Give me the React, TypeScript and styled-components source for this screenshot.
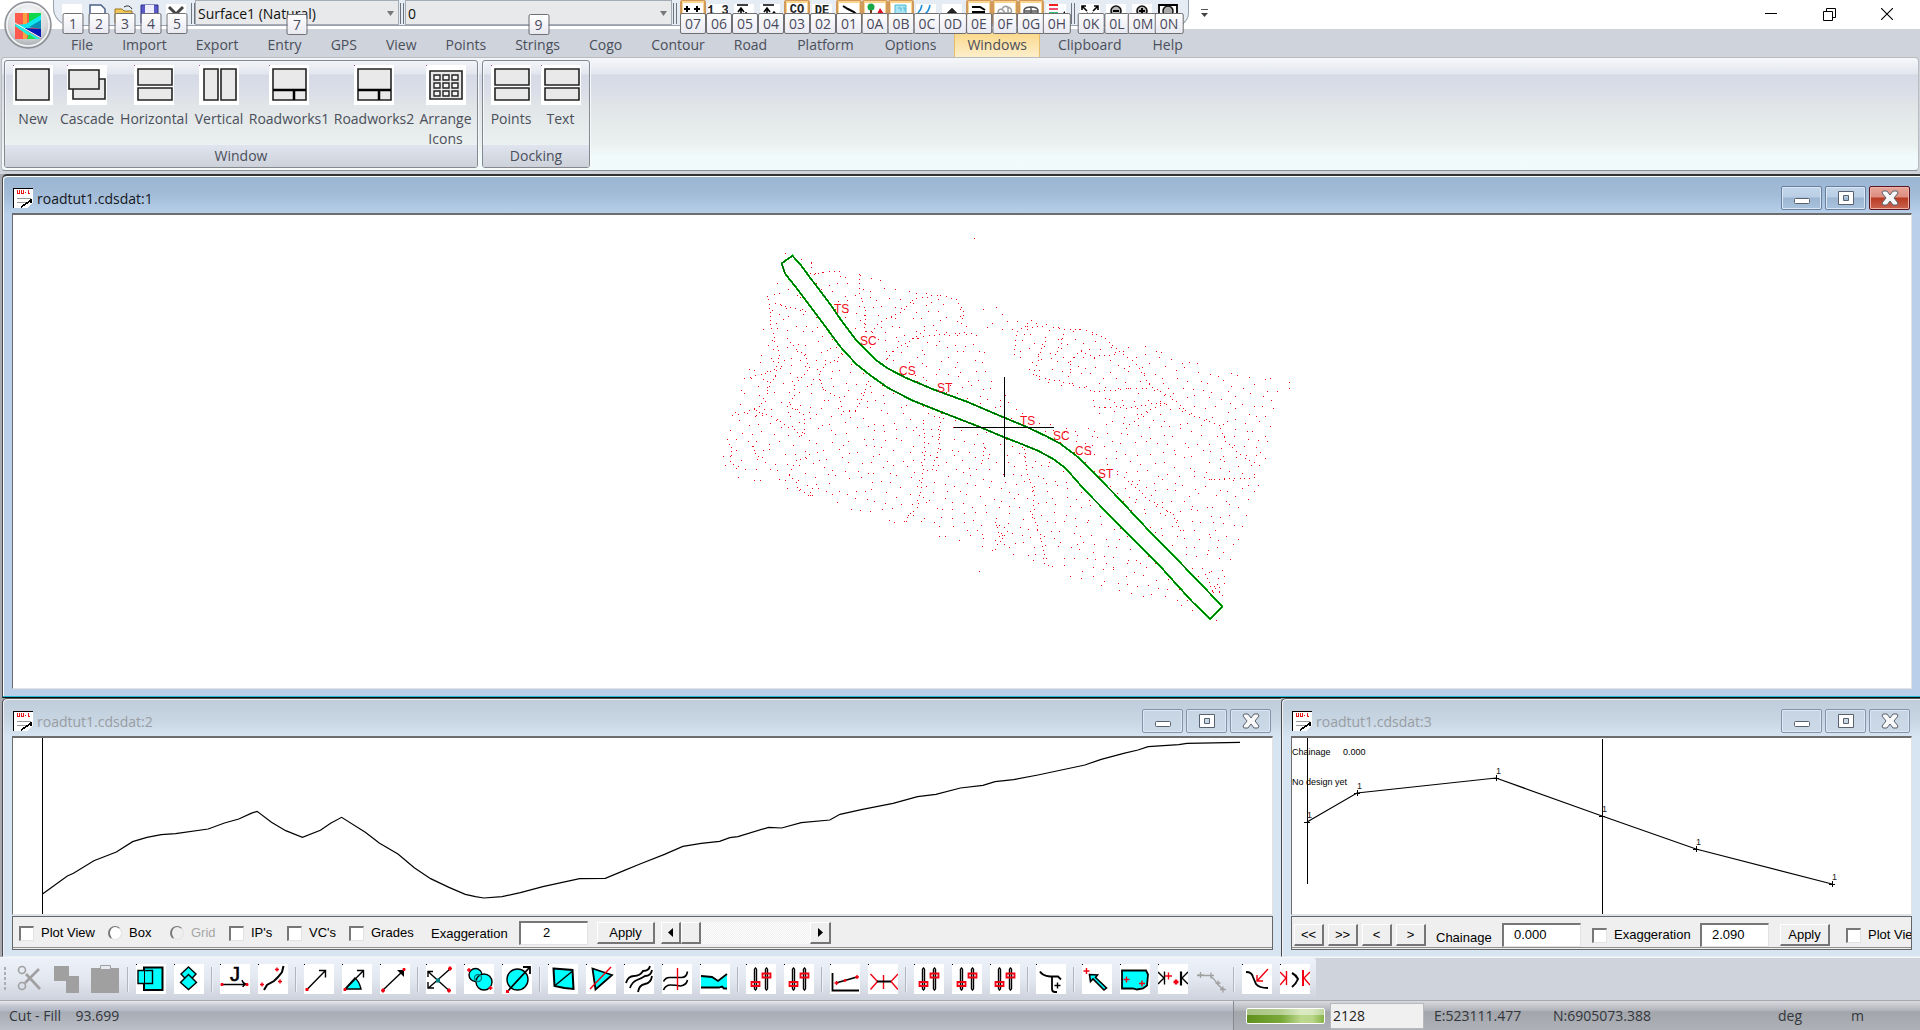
import React from "react";
import styled, { createGlobalStyle, css } from "styled-components";

const UI = `"Open Sans", "Noto Sans", sans-serif`;
const DIALOG = `"Liberation Sans", Arial, sans-serif`;

const Global = createGlobalStyle`
  * { box-sizing: border-box; }
  body { margin: 0; font-family: ${UI}; font-size: 14px; line-height: 20px; color: #4a4f5a; background: #cfd3dc; }
  button, input, select { font: inherit; color: inherit; margin: 0; }
  svg { display: block; }
`;

const Page = styled.div`
  display: flex;
  flex-direction: column;
  height: 100vh;
  overflow: hidden;
`;

/* ---------- title bar ---------- */

const TitleBar = styled.header`
  position: relative;
  display: flex;
  height: 29px;
  background: #fff;
  justify-content: space-between;
`;

const Orb = styled.button`
  position: absolute;
  left: 4px;
  top: 1px;
  z-index: 3;
  width: 49px;
  height: 49px;
  padding: 0;
  border: 0;
  background: none;
`;

const QuickBar = styled.div`
  display: flex;
  height: 26px;
  margin-left: 53px;
  padding: 0 6px;
  background: #e6ecf3;
  border: 1px solid #9aa2ae;
  border-top: 0;
  border-radius: 0 0 13px 18px;
`;

const QuickItem = styled.div`
  position: relative;
  width: 26px;
  height: 24px;
  z-index: 2;
`;

const QuickButton = styled.button<{ $on?: boolean; $blank?: boolean }>`
  width: 26px;
  height: 25px;
  padding: 3px 2px 0;
  background: none;
  border: 0;
  overflow: hidden;
  ${(p) =>
    p.$on &&
    css`
      padding: 1px 1px 0;
      background: #fdd48d;
      border: 2px solid #cf9a5c;
      border-top-width: 1px;
      border-radius: 2px;
    `}
  svg { width: 20px; height: 20px; background: ${(p) => (p.$blank ? "transparent" : "#fff")}; }
`;

const KeyTip = styled.span`
  position: absolute;
  top: 13px;
  left: 50%;
  transform: translateX(-50%);
  z-index: 2;
  min-width: 21px;
  height: 21px;
  padding: 0 4px;
  line-height: 19px;
  text-align: center;
  color: #4a4a5c;
  background: linear-gradient(#fff, #e9e9f2);
  border: 1px solid #6f6f74;
  border-radius: 2px;
`;

const QuickRule = styled.span<{ $space: number }>`
  width: 4px;
  height: 21px;
  margin: 3px ${(p) => p.$space}px 0 1px;
  border-left: 1px solid #6d747e;
  border-right: 1px solid #6d747e;
`;

const ComboBox = styled.div<{ $w: number }>`
  position: relative;
  width: ${(p) => p.$w}px;
  height: 25px;
  background: #e8e9ea;
  border: 1px solid #a3abb5;
  svg { position: absolute; right: 4px; top: 10px; }
`;

const Select = styled.select`
  width: 100%;
  height: 24px;
  padding: 2px 0 0 2px;
  border: 0;
  background: none;
  appearance: none;
  color: #111;
`;

const More = styled.button`
  width: 16px;
  height: 20px;
  margin: 3px 0 0 7px;
  padding: 0;
  border: 0;
  background: none;
`;

const LeftPart = styled.div`
  display: flex;
`;

const Captions = styled.div`
  display: flex;
  padding-right: 4px;
`;

const CaptionButton = styled.button`
  display: grid;
  place-items: center;
  width: 58px;
  height: 28px;
  padding: 0;
  border: 0;
  background: none;
`;

/* ---------- ribbon ---------- */

const Tabs = styled.nav`
  display: flex;
  gap: 5px;
  height: 28px;
  padding-left: 59px;
  background: #cfd3dc;
`;

const Tab = styled.button<{ $active?: boolean; $wide?: boolean }>`
  height: 24px;
  margin-top: 4px;
  padding: 0 ${(p) => (p.$wide ? 13 : 12)}px;
  line-height: 24px;
  border: 0;
  background: none;
  ${(p) =>
    p.$active &&
    css`
      background: linear-gradient(#fbd98c, #fdeecb);
      box-shadow: inset 1px 0 #e8bd6a, inset -1px 0 #e8bd6a;
    `}
`;

const Ribbon = styled.section`
  display: flex;
  gap: 4px;
  height: 114px;
  margin: 0 1px;
  padding: 2px 2px 0;
  background: linear-gradient(
    #f6f7fa 0, #e3e6ee 16px, #d5dae6 17px, #dcdfe8 36px, #e1e5e7 48px, #eaefef 84px, #f0fafa 98px, #f2fbfb 114px
  );
  border: 1px solid #b9bbbd;
  border-bottom: 1px solid #8e9097;
  border-radius: 4px;
`;

const RibbonGroup = styled.section`
  display: flex;
  flex-direction: column;
  height: 108px;
  border: 1px solid #85888f;
  border-radius: 3px;
  overflow: hidden;
  box-shadow: inset 1px 1px #f4f6fa, 1px 1px #f8fafb;
`;

const GroupItems = styled.div`
  display: flex;
  flex: 1;
  min-height: 0;
  align-items: flex-start;
  padding: 4px 3px 0 4px;
`;

const GroupName = styled.div`
  flex: none;
  height: 22px;
  line-height: 22px;
  text-align: center;
  background: linear-gradient(#e0e4ee, #cdd1da);
`;

const BigButton = styled.button<{ $w: number }>`
  display: flex;
  flex-direction: column;
  align-items: center;
  width: ${(p) => p.$w}px;
  padding: 0;
  border: 0;
  background: none;
  white-space: nowrap;
  svg { width: 40px; height: 40px; margin-bottom: 4px; background: #fff; }
`;

/* ---------- document windows ---------- */

const Desk = styled.main`
  display: grid;
  flex: 1;
  min-height: 0;
  grid-template-columns: minmax(0, 1279fr) minmax(0, 639fr);
  grid-template-rows: minmax(0, 1fr) 259px;
  margin-top: 3px;
  padding-left: 2px;
  background: #a9abb1;
`;

const Doc = styled.section<{ $active?: boolean }>`
  display: flex;
  flex-direction: column;
  min-width: 0;
  grid-column: ${(p) => (p.$active ? "1 / 3" : "auto")};
  padding: 0 8px ${(p) => (p.$active ? 8 : 6)}px 9px;
  border-left: 1px solid #47494d;
  border-top: ${(p) => (p.$active ? "2px solid #333" : "1px solid #555")};
  border-bottom: ${(p) => (p.$active ? "1px solid #111" : "1px solid #e8edf3")};
  border-radius: 5px 0 0 0;
  box-shadow: ${(p) => (p.$active ? "inset 0 -1px #20bcd8, inset 1px 1px #fff" : "inset 1px 1px #eef2f6")};
  background: ${(p) =>
    p.$active
      ? "linear-gradient(#99b4d1 0, #a3bdd9 20px, #b8d0ea 38px, #bad0ea 39px)"
      : "linear-gradient(#bfccda 0, #c7d4e1 20px, #d6e3f1 37px, #d7e4f2 38px)"};
`;

const DocTitle = styled.header<{ $active?: boolean }>`
  display: flex;
  flex: none;
  align-items: flex-start;
  height: 37px;
  padding: 10px 2px 0 1px;
  color: ${(p) => (p.$active ? "#15171c" : "#989da3")};
  > svg { margin-top: 2px; }
  h2 { flex: 1; margin: 0 0 0 4px; font-size: 14px; font-weight: 400; line-height: 25px; }
`;

const DocButtons = styled.div`
  display: flex;
  gap: 3px;
`;

const DocButton = styled.button<{ $active?: boolean; $red?: boolean }>`
  display: grid;
  place-items: center;
  width: 41px;
  height: 24px;
  padding: 0;
  border-radius: 2px;
  border: 1px solid ${(p) => (p.$red ? "#5b1420" : p.$active ? "#67809f" : "#8393a9")};
  box-shadow: inset 0 0 0 1px ${(p) => (p.$red ? "#eeb3a8" : "#dbe7f4")};
  background: ${(p) =>
    p.$red
      ? "linear-gradient(#e8a69b 0, #dd8d7f 10px, #b83a22 11px, #ca6450)"
      : p.$active
      ? "linear-gradient(#c3d6ea 0, #b9cee5 10px, #9cb6d2 11px, #a9c2dd)"
      : "linear-gradient(#c7d4e2, #ccd9e8)"};
`;

const Pane = styled.div`
  flex: 1;
  min-height: 0;
  overflow: hidden;
  background: #fff;
  border: 1px solid #6d6d6d;
  border-top-width: 2px;
  border-right-color: #e3e3e3;
  border-bottom-color: #e3e3e3;
  svg { width: 100%; height: 100%; }
`;

const DialogBar = styled.form<{ $low?: boolean }>`
  display: flex;
  flex: none;
  align-items: center;
  height: 34px;
  margin-top: 1px;
  padding: ${(p) => (p.$low ? "4px 0 0 2px" : "0 0 0 6px")};
  overflow: hidden;
  white-space: nowrap;
  font-family: ${DIALOG};
  font-size: 13px;
  line-height: 16px;
  color: #000;
  background: #efefef;
  border: 1px solid #666;
  box-shadow: inset 0 -1px #efefef, inset 0 -2px #8e8e8e;
`;

const Choice = styled.label<{ $w: number; $off?: boolean }>`
  display: flex;
  flex: none;
  align-items: center;
  gap: 7px;
  width: ${(p) => p.$w}px;
  color: ${(p) => (p.$off ? "#a6a6a6" : "inherit")};
`;

const Tick = styled.input<{ $off?: boolean }>`
  appearance: none;
  width: 15px;
  height: 15px;
  flex: none;
  background: ${(p) => (p.$off ? "#efefef" : "#fff")};
  border: 2px solid #777;
  border-right: 1px solid #e2e2e2;
  border-bottom: 1px solid #e2e2e2;
  &[type="radio"] { width: 14px; height: 14px; border-radius: 50%; border-width: 1px 1px 1px 2px; }
`;

const Caption = styled.label<{ $w: number; $low?: boolean }>`
  flex: none;
  width: ${(p) => p.$w}px;
  padding-top: ${(p) => (p.$low ? 5 : 1)}px;
`;

const Field = styled.input<{ $w: number; $gap: number }>`
  flex: none;
  width: ${(p) => p.$w}px;
  height: 24px;
  margin-right: ${(p) => p.$gap}px;
  padding: 0 0 2px 10px;
  background: #fff;
  border: 2px solid #777;
  border-right: 1px solid #e2e2e2;
  border-bottom: 1px solid #e2e2e2;
  &[data-center] { padding-left: 22px; }
`;

const PushButton = styled.button<{ $w: number; $gap: number }>`
  flex: none;
  display: grid;
  place-items: center;
  width: ${(p) => p.$w}px;
  height: 22px;
  margin-right: ${(p) => p.$gap}px;
  padding: 0;
  background: #efefef;
  border: 1px solid #fff;
  border-right: 2px solid #757575;
  border-bottom: 2px solid #757575;
`;

const Slider = styled.input`
  appearance: none;
  flex: none;
  width: 129px;
  height: 22px;
  background: repeating-conic-gradient(#fff 0 25%, #efefef 0 50%) 0 0 / 2px 2px;
  &::-webkit-slider-thumb {
    appearance: none;
    width: 20px;
    height: 22px;
    background: #efefef;
    border: 1px solid #fff;
    border-right: 2px solid #757575;
    border-bottom: 2px solid #757575;
  }
`;

/* ---------- bottom bars ---------- */

const ToolStrip = styled.div`
  display: flex;
  height: 44px;
  background: #cfd3dc;
  border-top: 1px solid #f4f6fa;
  border-bottom: 1px solid #a6a9b2;
`;

const Tools = styled.div`
  display: flex;
  align-items: center;
  padding: 0 2px 0 4px;
  border-radius: 0 3px 0 0;
  background: linear-gradient(#edf1f9, #e3e7f0 50%, #ced2dc);
`;

const Grip = styled.span`
  width: 6px;
  height: 24px;
  background: repeating-linear-gradient(#a9adb6 0 3px, transparent 3px 5px) 0 0 / 2px 100% no-repeat;
`;

const Tool = styled.button<{ $plain?: boolean }>`
  width: 38px;
  height: 30px;
  padding: 0 4px;
  border: 0;
  background: none;
  svg {
    width: 30px;
    height: 30px;
    background: ${(p) => (p.$plain ? "transparent" : "#fff")};
  }
`;

const ToolRule = styled.span`
  width: 2px;
  height: 25px;
  margin: 0 3px;
  background: #b1b5bf;
  border-right: 1px solid #eef1f7;
`;

const StatusBar = styled.footer`
  display: flex;
  height: 29px;
  color: #33363c;
  line-height: 29px;
  background: linear-gradient(#e9e9ec 0, #c3c6d0 5px, #b3b8c5 10px, #a6acb4 11px, #bcbfc8);
`;

const StatusMessage = styled.div`
  flex: 1;
  padding-left: 9px;
  white-space: pre;
  border-right: 1px solid #85888e;
`;

const StatusFields = styled.div`
  display: flex;
  align-items: center;
  width: 686px;
  background: linear-gradient(#d8d9dd 0, #b4b6bd 9px, #a2a5aa 11px, #aeb2b8);
`;

const Progress = styled.div`
  width: 79px;
  height: 16px;
  margin: 0 5px 0 12px;
  border: 1px solid #fff;
  border-radius: 2px;
  background: linear-gradient(rgba(255, 255, 255, 0.45) 0 45%, rgba(255, 255, 255, 0) 46%),
    linear-gradient(90deg, #5f901c, #7aa93a 45%, #bcd88e 70%, #b8d588 85%, #86b446);
`;

const StatusInput = styled.input`
  width: 94px;
  height: 26px;
  margin-right: 10px;
  padding: 0 2px;
  background: #f0f0f0;
  border: 1px solid #b6b9be;
  color: #222;
`;

const StatusCell = styled.span<{ $w: number }>`
  width: ${(p) => p.$w}px;
`;

/* ---------- drawings ---------- */

type Pt = [number, number];

// Survey sheet coordinates to pane pixels.
const sheet = ([x, y]: Pt): Pt => [x * 0.3954 + 677, y / 3 + 5];
const poly = (pts: Pt[]) => pts.map((p) => p.join(",")).join(" ");

const ROAD: Pt[] = [
  [259, 107], [280, 135], [305, 175], [350, 245], [385, 305], [420, 360], [470, 420], [500, 445], [545, 473],
  [615, 508], [700, 545], [795, 593], [850, 620], [900, 648], [935, 670], [975, 705], [1010, 745], [1080, 830],
  [1155, 925], [1240, 1028], [1300, 1102], [1335, 1145], [1346, 1160], [1316, 1197], [1270, 1145],
  [1190, 1040], [1100, 933], [1000, 812], [950, 745], [920, 718], [880, 692], [830, 668], [795, 652], [735, 622],
  [640, 578], [560, 540], [500, 503], [455, 465], [420, 432], [380, 380], [330, 300], [270, 205], [240, 160],
  [232, 130],
];

const EXTENT: Pt[] = [
  [245, 105], [300, 125], [350, 135], [420, 155], [500, 185], [560, 205], [680, 240], [690, 300], [725, 340],
  [780, 262], [830, 290], [870, 290], [950, 322], [1000, 325], [1080, 385], [1145, 375], [1280, 408], [1335, 450],
  [1450, 460], [1490, 490], [1480, 640], [1450, 740], [1425, 840], [1380, 980], [1360, 1110], [1330, 1200],
  [1190, 1145], [1035, 1100], [900, 1050], [760, 1000], [580, 932], [410, 870], [290, 828], [100, 765], [70, 740],
  [72, 700], [110, 560], [135, 470], [160, 430], [180, 325], [190, 240], [222, 170],
];

const HOLES: Pt[][] = [
  [[790, 330], [815, 340], [810, 430], [870, 480], [1020, 520], [1010, 600], [890, 600], [800, 500], [745, 400], [740, 330]],
];

const BREAKLINES: Pt[][] = [
  [[196, 225], [200, 310], [222, 400], [215, 450], [190, 520], [165, 570], [160, 600]],
  [[213, 247], [300, 275]],
  [[135, 473], [190, 455], [235, 440]],
  [[250, 365], [285, 400], [300, 440], [262, 490], [262, 520], [245, 555], [285, 580], [290, 650]],
  [[380, 402], [340, 430], [322, 460], [330, 500], [372, 530], [385, 568], [415, 568], [440, 515], [450, 470]],
  [[105, 582], [160, 565], [215, 595], [290, 650]],
  [[300, 700], [265, 720], [250, 760], [270, 800], [305, 830]],
  [[315, 790], [300, 812], [310, 832]],
  [[425, 160], [425, 215], [440, 270], [440, 345]],
  [[455, 330], [480, 300], [530, 275], [560, 235], [620, 222], [670, 235], [687, 270], [685, 320]],
  [[495, 415], [520, 380], [560, 355], [600, 343], [720, 337]],
  [[560, 355], [600, 320]],
  [[590, 610], [590, 690], [583, 800], [570, 860], [530, 910]],
  [[630, 590], [625, 680], [605, 760]],
  [[815, 400], [825, 330], [870, 290]],
  [[850, 323], [900, 312], [930, 323], [1000, 328], [1050, 355], [1085, 390], [1125, 430], [1165, 500], [1210, 525], [1260, 580], [1335, 612], [1350, 660], [1400, 710], [1450, 740]],
  [[945, 325], [935, 380], [905, 420]],
  [[868, 460], [885, 380], [900, 350]],
  [[870, 465], [930, 480], [1020, 510], [1165, 500]],
  [[960, 455], [960, 420], [985, 390], [1020, 408], [1085, 400]],
  [[1100, 620], [1150, 570], [1210, 540]],
  [[1020, 555], [1100, 560], [1200, 543]],
  [[845, 670], [850, 760], [868, 810], [865, 880], [885, 950], [895, 1040]],
  [[770, 905], [800, 930], [775, 970], [763, 1000]],
  [[770, 905], [778, 945], [800, 940]],
  [[1310, 775], [1440, 770]],
  [[1095, 770], [1150, 830], [1220, 880], [1240, 940]],
  [[303, 125], [303, 170]],
  [[310, 160], [350, 150], [390, 150]],
  [[740, 680], [735, 740]],
  [[100, 680], [97, 720], [130, 745]],
  [[155, 675], [160, 700], [190, 715]],
  [[1300, 1060], [1320, 1110], [1350, 1110]],
  [[1310, 1140], [1330, 1090], [1345, 1135]],
];

const inside = ([x, y]: Pt, ring: Pt[]) => {
  let hit = false;
  for (let i = 0, j = ring.length - 1; i < ring.length; j = i++) {
    const [xi, yi] = ring[i];
    const [xj, yj] = ring[j];
    if (yi > y !== yj > y && x < ((xj - xi) * (y - yi)) / (yj - yi) + xi) hit = !hit;
  }
  return hit;
};

const surveyPoints = (): string => {
  const dots: Pt[] = [[717, 55], [742, 267], [775, 262], [732, 1054], [241, 100], [790, 328], [1330, 1201], [1516, 485], [1516, 503]];
  let seed = 7;
  const rnd = () => ((seed = (seed * 16807) % 2147483647) / 2147483647);
  for (const line of BREAKLINES) {
    for (let i = 1; i < line.length; i++) {
      const [ax, ay] = line[i - 1];
      const [bx, by] = line[i];
      const n = Math.max(1, Math.round(Math.hypot(bx - ax, by - ay) / 13));
      for (let k = 0; k < n; k++) dots.push([ax + ((bx - ax) * k) / n + rnd() * 4, ay + ((by - ay) * k) / n + rnd() * 4]);
    }
  }
  for (let r = 0; r < 44; r++) {
    for (let c = 0; c < 56; c++) {
      const p: Pt = [60 + c * 28 + (r % 2) * 10 + rnd() * 20 - r * 3, 60 + r * 26 + c * 4 + rnd() * 20];
      if (inside(p, EXTENT) && !HOLES.some((h) => inside(p, h))) dots.push(p);
    }
  }
  return dots
    .filter((p) => !inside(p, ROAD))
    .map((p) => sheet(p))
    .map(([x, y]) => `M${Math.round(x)} ${Math.round(y)}h1v1h-1z`)
    .join("");
};

const MARKS: [number, number, string][] = [
  [364, 278, "TS"], [430, 375, "SC"], [529, 465, "CS"], [625, 516, "ST"],
  [834, 614, "TS"], [919, 659, "SC"], [974, 705, "CS"], [1032, 773, "ST"],
];

const PlanView = () => {
  const outline = poly(ROAD.map(sheet));
  return (
    <svg role="img" aria-label="Road plan">
      <path d={surveyPoints()} fill="#f00016" shapeRendering="crispEdges" />
      <polygon points={outline} fill="none" stroke="#00dc10" strokeWidth="2" shapeRendering="crispEdges" />
      <polygon points={outline} fill="none" stroke="#002800" strokeWidth="1" />
      <path d="M991 162v100M941 212h100" stroke="#000" strokeWidth="1" shapeRendering="crispEdges" />
      <g fill="#f0101c" fontFamily="Liberation Sans, sans-serif" fontSize="12">
        {MARKS.map(([x, y, t]) => {
          const [px, py] = sheet([x, y]);
          return <text key={x} x={Math.round(px)} y={Math.round(py)}>{t}</text>;
        })}
      </g>
    </svg>
  );
};

const PROFILE: Pt[] = [
  [105, 641], [165, 588], [180, 580], [230, 542], [285, 516], [325, 485], [360, 472], [395, 464], [430, 461],
  [510, 447], [550, 429], [585, 417], [615, 400], [630, 394], [665, 427], [700, 452], [741, 472], [785, 451],
  [810, 430], [837, 412], [895, 457], [930, 490], [975, 522], [1015, 563], [1055, 596], [1100, 622], [1140, 643],
  [1165, 650], [1185, 654], [1230, 650], [1275, 638], [1330, 620], [1420, 596], [1483, 595], [1530, 571],
  [1568, 552], [1628, 523], [1673, 499], [1718, 490], [1763, 484], [1788, 473], [1808, 470], [1883, 442],
  [1915, 444], [1963, 428], [2033, 420], [2058, 403], [2113, 388], [2188, 370], [2248, 350], [2293, 343],
  [2353, 324], [2408, 316], [2438, 305], [2483, 299], [2543, 285], [2658, 255], [2698, 238], [2753, 220],
  [2788, 210], [2813, 200], [2888, 194], [2908, 190], [3038, 187],
];

const ProfileView = () => (
  <svg role="img" aria-label="Long section">
    <path d="M29 0v176" stroke="#000" shapeRendering="crispEdges" />
    <polyline
      points={poly(PROFILE.map(([x, y]): Pt => [x / 2.45 - 13, y / 3 - 58]))}
      fill="none" stroke="#000" strokeWidth="1.2"
    />
  </svg>
);

const SECTION: Pt[] = [[15, 84], [65, 55], [204, 40], [310, 78], [404, 111], [540, 146]];

const SectionView = () => (
  <svg role="img" aria-label="Cross section">
    <g stroke="#000" shapeRendering="crispEdges">
      <path d="M15 0v146M310 1v176" />
      {SECTION.map(([x, y]) => <path key={x} d={`M${x - 3} ${y}h6M${x} ${y - 3}v6`} />)}
    </g>
    <polyline points={poly(SECTION)} fill="none" stroke="#000" strokeWidth="1.2" />
    <g fontFamily="Liberation Sans, sans-serif" fontSize="9" fill="#222">
      {SECTION.map(([x, y]) => <text key={x} x={x} y={y - 4}>1</text>)}
      <text x="0" y="17" fill="#000">Chainage</text>
      <text x="51" y="17" fill="#000">0.000</text>
      <text x="0" y="47" fill="#000">No design yet</text>
    </g>
  </svg>
);

/* ---------- icons ---------- */

const RibbonIcon = ({ d, heavy, thin }: { d: string; heavy?: string; thin?: string }) => (
  <svg viewBox="0 0 40 40" aria-hidden="true">
    <path d="M0 0h1v1h-1z" fill="#a050a0" />
    <path d={d} fill="#e9e9e9" stroke="#222" strokeWidth="1.600" />
    {heavy && <path d={heavy} fill="none" stroke="#000" strokeWidth="2.500" />}
    {thin && <path d={thin} fill="#f4f4f4" stroke="#222" strokeWidth="1.400" />}
  </svg>
);

const SPLIT_H = "M4 4h34v16h-34zM4 23h34v12h-34z";
const ROADWORKS = "M4 4h33v31h-33z";
const CELLS = [10, 18, 26].flatMap((y) => [8, 17, 26].map((x) => `M${x} ${y}h6v5h-6z`)).join("");

type Big = { name: React.ReactNode; id: string; w: number; d: string; heavy?: string; thin?: string };
const WINDOW_ITEMS: Big[] = [
  { id: "New", name: "New", w: 48, d: "M3 4h33v31h-33z" },
  { id: "Cascade", name: "Cascade", w: 60, d: "M2 5h30v19h-30zM32 14h6v20h-32v-10h26z" },
  { id: "Horizontal", name: "Horizontal", w: 74, d: SPLIT_H },
  { id: "Vertical", name: "Vertical", w: 56, d: "M5 4h14v31h-14zM22 4h15v31h-15z" },
  { id: "Roadworks1", name: "Roadworks1", w: 84, d: ROADWORKS, heavy: "M4 25h33M25 25v10" },
  { id: "Roadworks2", name: "Roadworks2", w: 86, d: ROADWORKS, heavy: "M4 25h33M25 25v10" },
  { id: "Arrange", name: <>Arrange<br />Icons</>, w: 57, d: "M4 6h32v28h-32z", thin: CELLS },
];
const DOCK_ITEMS: Big[] = [
  { id: "Points", name: "Points", w: 48, d: SPLIT_H },
  { id: "Text", name: "Text", w: 51, d: SPLIT_H },
];

const OrbIcon = () => (
  <svg viewBox="0 0 49 49" width="49" height="49" aria-hidden="true">
    <defs>
      <radialGradient id="orb" cx="50%" cy="30%" r="75%">
        <stop offset="0" stopColor="#fff" />
        <stop offset="0.6" stopColor="#d5d7da" />
        <stop offset="1" stopColor="#9a9da3" />
      </radialGradient>
    </defs>
    <circle cx="24" cy="24" r="23" fill="url(#orb)" stroke="#8d9096" strokeWidth="1.5" />
    <circle cx="24" cy="24" r="21" fill="none" stroke="#f4f5f6" strokeWidth="1.5" />
    <path d="M11 12h26v26h-26z" fill="#ff5a4e" />
    <path d="M19 12h4v26h-4z" fill="#ffa040" />
    <path d="M25 12h12v5l-12 10z" fill="#10d848" />
    <path d="M37 14v8l-15 7-11-5 11-1z" fill="#10e8f0" />
    <path d="M25 26l12-7v9z" fill="#0890b8" />
    <path d="M19 27l18 1v9z" fill="#0818b8" />
    <path d="M11 23l26 15h-8l-18-13z" fill="#20f0e0" />
    <path d="M25 33l7 5h-9z" fill="#20e050" />
    <path d="M11 22l26 15" stroke="#fff" strokeWidth="1" />
  </svg>
);

const DocIcon = () => (
  <svg width="20" height="20" viewBox="0 0 20 20" aria-hidden="true" shapeRendering="crispEdges">
    <path d="M0 0h20v14l-6 6h-14z" fill="#fff" />
    <path d="M.5 20v-19.500h19.500" fill="none" stroke="#000" />
    <path d="M4 2v3h2v-3M8 2v3h2v-3M12 4h1M15 2v3h2" fill="none" stroke="#e81818" />
    <path d="M4 10h14M4 14h11" stroke="#999" />
    <path d="M8 19l3-2 3-2 4-3v3" fill="none" stroke="#000" strokeWidth="1.500" />
  </svg>
);

const MinGlyph = () => (
  <svg width="18" height="16" aria-hidden="true"><rect x="1.500" y="8.500" width="15" height="5" rx="1" fill="#fff" stroke="#59616f" /></svg>
);
const MaxGlyph = () => (
  <svg width="18" height="16" aria-hidden="true">
    <path d="M1.500 1.500h15v13h-15zM6.500 5.500v5h5v-5z" fill="#fff" fillRule="evenodd" stroke="#59616f" />
  </svg>
);
const CloseGlyph = () => (
  <svg width="18" height="16" viewBox="0 0 18 16" aria-hidden="true">
    <path d="M2 1h4l3 4 3-4h4l1 2-4 5 4 5-1 2h-4l-3-4-3 4h-4l-1-2 4-5-4-5z" fill="#f8f8f8" stroke="#59616f" />
  </svg>
);

const plus = (x: number, y: number, r = 2) => `M${x - r} ${y}h${r * 2}M${x} ${y - r}v${r * 2}`;
const K = { fill: "none", stroke: "#000", strokeWidth: 1.4 } as const;
const R = { fill: "none", stroke: "#f00010", strokeWidth: 1.4 } as const;
const C = { fill: "#00ffff", stroke: "#000", strokeWidth: 1.4 } as const;
const G = { fill: "none", stroke: "#a0a0a0", strokeWidth: 1.6 } as const;

const Sliders = (
  <>
    <path {...K} d="M8.500 5v20M10.500 5v20M8.500 5l1-1 1 1M8.500 25l1 1 1-1M19.500 5v20M21.500 5v20M19.500 5l1-1 1 1M19.500 25l1 1 1-1" />
    <path {...R} strokeWidth={1.8} d="M5.500 18h8v4h-8zM16.500 9.500h8v4h-8z" />
  </>
);

const TOOLS: { id: string; art?: React.ReactNode; plain?: boolean }[] = [
  { id: "Cut", plain: true, art: <><path {...G} strokeWidth={2.600} d="M25 5l-14 14M12 10l14 15" /><circle {...G} cx="8" cy="6" r="3.500" /><circle {...G} cx="8" cy="22" r="3.500" /></> },
  { id: "Copy", plain: true, art: <path d="M2 2h15v10h10v17h-13v-12h-12z" fill="#a0a0a0" /> },
  { id: "Paste", plain: true, art: <><path d="M1 4h28v25h-28z" fill="#a0a0a0" /><path d="M10.500 1.500h10v4h-10z" fill="#e6e9f1" stroke="#a0a0a0" /></> },
  { id: "|" },
  { id: "Overlay", art: <><path {...C} strokeWidth={2} d="M8 3.500h18.500v22.500h-18.500z" /><path d="M2 6.500h6v13h-6z" fill="#00ffff" /><path {...K} d="M2 6.500h14.500v13h-14.500z" /></> },
  { id: "Layers", art: <><path {...C} d="M14.500 3l7.500 7-7.500 8-7.500-8z" /><path {...C} d="M14.500 10.500l8 8-8 7-8-7z" /></> },
  { id: "|" },
  { id: "Join", art: <><text x="10" y="17" fontFamily="Liberation Sans, sans-serif" fontSize="20" stroke="#000" strokeWidth="0.600">J</text><path {...K} d="M1 20.500h27M22 16q1 4 5 4q-4 1-4 3" /><path {...R} strokeWidth={2} d={plus(2, 20.5, 1.5) + plus(27, 20.5, 1.5)} /></> },
  { id: "Fit curve", art: <><path {...K} strokeWidth={2} d="M6 26l3-5 7-4 4-4 4-5 1.500-6" /><path {...R} d={plus(19, 5.5) + plus(22, 17.5) + plus(4, 20.5)} /></> },
  { id: "|" },
  { id: "Bearing", art: <><path {...K} d="M3 25.500l18.500-19M15 6.500h6.500v7" /><path {...R} strokeWidth={2.500} d={plus(3, 25.5, 1.5)} /></> },
  { id: "Angle", art: <><path {...C} d="M3 25l10-11q4 3 6 11z" /><path {...K} d="M3 25.500l18.500-19M15 6.500h6.500v7" /><path {...R} strokeWidth={2} d={plus(3, 25.5, 1.5)} /></> },
  { id: "Join points", art: <><path {...K} d="M3 26l21-20" /><path d="M17 6h7v7z" /><path {...R} strokeWidth={2} d={plus(3, 26.5) + plus(24, 5.5, 1.5)} /></> },
  { id: "|" },
  { id: "Intersect", art: <><path {...K} d="M2 7.500l21 19M24 5l-21.500 19M2 13v-5.500h5M2 18v6h6" /><path d="M10 14.500h4v4h-4z" fill="#008080" /><path {...R} strokeWidth={2} d={plus(24, 4.5) + plus(23, 26.5)} /></> },
  { id: "Circles", art: <><circle {...C} cx="11.500" cy="11" r="6.500" /><circle {...C} cx="20" cy="18" r="8" /><circle {...K} stroke="#008080" cx="14" cy="14" r="3.500" /><path {...R} d={plus(5, 6) + plus(26.5, 24)} /></> },
  { id: "Diameter", art: <><ellipse {...C} cx="15.500" cy="15.500" rx="10.500" ry="10.500" /><path {...K} d="M5.500 27.500l22-24M21 3h7v7" strokeWidth={1.8} /><path {...R} strokeWidth={2.500} d={plus(5.5, 27.5, 1.5)} /></> },
  { id: "|" },
  { id: "Area", art: <><path {...C} strokeWidth={2} d="M5.500 4.500l19 1.500 1 19-9-1-10-2z" /><path {...K} d="M7 21.500l17-14" /></> },
  { id: "Triangle", art: <><path {...C} strokeWidth={1.800} d="M6.500 4.500l19.500 6.500-16.500 14.500z" /><path {...R} d="M4 25l21-22" /></> },
  { id: "Contours", art: <path {...K} strokeWidth={1.8} d="M2 19q2-7 8-7t9-5q6 0 7-5M6 24q2-6 7-8t8-4q6 0 7-6M14 28q1-7 7-8t7-8" /> },
  { id: "Profile", art: <><path {...K} strokeWidth={1.6} d="M1.500 17.500q2-4 6-4h12q5 0 6-6M1.500 26q2-5 7-5t10 1q6-1 7-6" /><path {...R} d="M15.500 4v22" /></> },
  { id: "Terrain", art: <><path fill="#00ffff" d="M1 12l11 1 6 4 9-7v14h-26z" /><path {...K} strokeWidth={1.8} d="M1 12l11 1 6 4 9-7M1 23.500h18l3-1 2 2h3" /></> },
  { id: "|" },
  { id: "Levels A", art: Sliders },
  { id: "Levels B", art: Sliders },
  { id: "|" },
  { id: "Graph", art: <><path {...K} strokeWidth={1.8} d="M2.500 9v17.500h26.500M6 19l21-6" /><path {...R} d={plus(6.5, 19) + plus(15, 16.5, 1.5) + plus(27, 13)} /></> },
  { id: "Crossing", art: <><path {...R} d="M2.500 10l7 7.500-7 8M30 10l-7 7.500 7 8M15.500 11v14" /><path {...K} strokeWidth={2} d="M9 17.500h14" /></> },
  { id: "|" },
  { id: "Levels C", art: Sliders },
  { id: "Levels D", art: Sliders },
  { id: "Levels E", art: Sliders },
  { id: "|" },
  { id: "Kerb return", art: <><path {...K} strokeWidth={1.8} d="M4 7.500q2 4 10 5h8l3 3M16 13v12q0 3 3 3h2" /><path {...K} d={plus(21.5, 21.5, 3)} /></> },
  { id: "|" },
  { id: "Pick", art: <><path {...R} d={plus(4.5, 7, 3)} /><path {...C} strokeWidth={1.600} d="M7.500 10.500l8 .5-2 2.500 11 10.500-2.500 2-11-11-2.500 2.500z" /></> },
  { id: "Pick area", art: <><path {...C} strokeWidth={1.8} d="M2 6.500h14l10 0 2 4-1 11-4 3-6 1-4-1h-11z" /><path {...R} d={plus(6.5, 15.5, 3) + plus(22, 19.5, 3)} /></> },
  { id: "Match", art: <><path {...K} d="M0 8l6 6-6 6M6.500 7.500v13M30 8l-6 6 6 6" /><path {...K} strokeWidth={2.2} d="M23 7.500v14" /><path {...R} d={plus(10.5, 12, 3.5)} /><path {...R} strokeWidth={2.500} d={plus(18, 18, 2.5)} /></> },
  { id: "Trace", plain: true, art: <path {...G} strokeWidth={1.300} d={"M1 11.500h13q5 4 7 8l6 6" + plus(4.5, 11, 3) + plus(15, 11.5, 3) + plus(22, 19, 2.5) + plus(27, 25.5, 3)} /> },
  { id: "|" },
  { id: "Offset", art: <><path {...K} strokeWidth={1.8} d="M4 8q6 0 7 5l3 7q3 4 12 4" /><path {...R} d="M26 5l-11 12M15 11v6h6" /></> },
  { id: "Mirror", art: <><path {...R} d="M0 8l6 6-6 7M6.500 7v14M30 8l-6 6 6 7" /><path {...R} strokeWidth={2} d="M23 6v16" /><path {...K} strokeWidth={2} d="M12 9q4 2 6 6-2 5-6 8" /></> },
];

const qtext = (t: string) => (
  <text x="10" y="10" textAnchor="middle" fontFamily="Liberation Mono, monospace" fontWeight="700" fontSize="12" fill="#222">{t}</text>
);

type Quick = { tip: string; art?: React.ReactNode; on?: boolean; blank?: boolean };
const QUICK_LEFT: Quick[] = [
  { tip: "1" },
  { tip: "2", blank: true, art: <path d="M2 1h11l4 4v15h-15z" fill="#fff" stroke="#4d6288" strokeWidth="1.5" /> },
  { tip: "3", blank: true, art: <><path d="M1 5h7l2 2h8v12h-17z" fill="#f3c95a" stroke="#9a7420" /><path d="M10 3q5-3 8 2" fill="none" stroke="#333" /></> },
  { tip: "4", blank: true, art: <><path d="M1 1h17v18h-17z" fill="#5a5ac8" stroke="#2c2c88" /><path d="M5 1h9v8h-9z" fill="#eef" /></> },
  { tip: "5", art: <path d="M3 3l7 7 7-7" fill="none" stroke="#444" strokeWidth="3" /> },
];
const QUICK_MID: Quick[] = [
  { tip: "07", on: true, art: <path {...K} strokeWidth={2} d={plus(4, 6, 3) + plus(14, 6, 3)} /> },
  { tip: "06", art: qtext("1 3") },
  { tip: "05", art: <path {...K} strokeWidth={1.6} d="M3 1h11M7 18v-14M4 8l3-4 3 4M12 8v5l3 2" /> },
  { tip: "04", art: <path {...K} strokeWidth={1.6} d="M3 1h11M7 18v-14M4 8l3-4 3 4M11 12l3-4 4 5" /> },
  { tip: "03", on: true, art: qtext("CO") },
  { tip: "02", art: qtext("DE") },
  { tip: "01", on: true, art: <path {...K} strokeWidth={2} d="M4 3l5 3 6 3 3 3" /> },
  { tip: "0A", on: true, art: <><circle cx="6" cy="4" r="3.500" fill="#18a848" /><path d="M6 7v4" stroke="#704010" strokeWidth="2" /><path d="M12 11l3-6 4 6z" fill="#e01020" /></> },
  { tip: "0B", on: true, art: <path d="M4 2h11v9h-11zM7 5h3v3M12 5h2v3" fill="#a8e4f4" stroke="#50b8d0" /> },
  { tip: "0C", art: <path d="M6 1q-1 5-4 8M14 1q-1 6-5 9" fill="none" stroke="#2090d8" strokeWidth="1.6" /> },
  { tip: "0D", art: <path d="M4 10l6-6 6 6z" fill="#222" stroke="#555" /> },
  { tip: "0E", on: true, art: <path {...K} strokeWidth={2} d="M3 4h8l5 3M3 9h13" /> },
  { tip: "0F", on: true, art: <path {...G} d="M3 10q0-4 4-4q2-4 6-2q5 2 3 6zM7 6l3 4M13 4v6" /> },
  { tip: "0G", on: true, art: <path {...K} stroke="#555" d="M3 10v-3q1-3 7-3t7 3v3zM10 4v6M3 8h14" /> },
  { tip: "0H", art: <><path d="M3 1h9" stroke="#f02020" strokeWidth="2" /><path d="M3 5h9" stroke="#f05070" strokeWidth="2" /><path d="M3 9h9" stroke="#30c070" strokeWidth="2" /><path d="M15 11l4-4v4z" /></> },
];
const QUICK_ZOOM: Quick[] = [
  { tip: "0K", art: <path {...K} strokeWidth={1.6} d="M2 6v-4h4M2 2l5 5M18 6v-4h-4M18 2l-5 5M4 12l4-3M16 12l-4-3" /> },
  { tip: "0L", art: <><circle cx="10" cy="7" r="5" fill="#bbb" stroke="#111" strokeWidth="1.6" /><path {...K} strokeWidth={2} d="M7 7h6" /></> },
  { tip: "0M", art: <><circle cx="10" cy="7" r="5" fill="#bbb" stroke="#111" strokeWidth="1.6" /><path {...K} strokeWidth={2} d="M7 7h6M10 4v6" /></> },
  { tip: "0N", art: <><path {...K} strokeWidth={1.8} d="M1 12v-11h18v11" /><circle cx="10" cy="7" r="5" fill="#aaa" stroke="#111" strokeWidth="1.5" /></> },
];

const QuickButtons = ({ items }: { items: Quick[] }) => (
  <>
    {items.map((q) => (
      <QuickItem key={q.tip}>
        <QuickButton $on={q.on} $blank={q.blank} aria-label={`Quick ${q.tip}`}>
          <svg viewBox="0 0 20 20" aria-hidden="true">{q.art}</svg>
        </QuickButton>
        <KeyTip>{q.tip}</KeyTip>
      </QuickItem>
    ))}
  </>
);

const Combo = ({ w, label, value, tip }: { w: number; label: string; value: string; tip: string }) => (
  <ComboBox $w={w}>
    <Select aria-label={label}><option>{value}</option></Select>
    <svg width="7" height="5" aria-hidden="true"><path d="M0 0h7l-3.500 5z" fill="#777" /></svg>
    <KeyTip>{tip}</KeyTip>
  </ComboBox>
);

const TABS = [
  "File", "Import", "Export", "Entry", "GPS", "View", "Points", "Strings", "Cogo", "Contour", "Road", "Platform",
  "Options", "Windows", "Clipboard", "Help",
];

const Group = ({ name, items }: { name: string; items: Big[] }) => (
  <RibbonGroup aria-label={name}>
    <GroupItems>
      {items.map((b) => (
        <BigButton key={b.id} $w={b.w}>
          <RibbonIcon d={b.d} heavy={b.heavy} thin={b.thin} />
          {b.name}
        </BigButton>
      ))}
    </GroupItems>
    <GroupName>{name}</GroupName>
  </RibbonGroup>
);

const DocWindow = ({ title, active, children }: { title: string; active?: boolean; children: React.ReactNode }) => (
  <Doc $active={active}>
    <DocTitle $active={active}>
      <DocIcon />
      <h2>{title}</h2>
      <DocButtons>
        <DocButton $active={active} aria-label="Minimize"><MinGlyph /></DocButton>
        <DocButton $active={active} aria-label="Maximize"><MaxGlyph /></DocButton>
        <DocButton $active={active} $red={active} aria-label="Close"><CloseGlyph /></DocButton>
      </DocButtons>
    </DocTitle>
    {children}
  </Doc>
);

const Option = ({ text, w, type = "checkbox", off }: { text: string; w: number; type?: string; off?: boolean }) => (
  <Choice $w={w} $off={off}>
    <Tick type={type} name={type === "radio" ? "frame" : text} disabled={off} $off={off} />
    {text}
  </Choice>
);

export default function App() {
  return (
    <Page>
      <Global />
      <TitleBar>
        <Orb aria-label="Application menu"><OrbIcon /></Orb>
        <LeftPart>
          <QuickBar>
            <QuickButtons items={QUICK_LEFT} />
            <QuickRule $space={0} />
            <Combo w={204} label="Surface" value="Surface1 (Natural)" tip="7" />
            <QuickRule $space={1} />
            <Combo w={267} label="Layer" value="0" tip="9" />
            <QuickRule $space={3} />
            <QuickButtons items={QUICK_MID} />
            <QuickRule $space={3} />
            <QuickButtons items={QUICK_ZOOM} />
          </QuickBar>
          <More aria-label="Customize">
            <svg width="16" height="16" aria-hidden="true"><path d="M5 4.500h7" stroke="#555" /><path d="M5 8h7l-3.500 4z" fill="#444" /></svg>
          </More>
        </LeftPart>
        <Captions>
          <CaptionButton aria-label="Minimize"><svg width="12" height="12"><path d="M0 5.500h12" stroke="#000" /></svg></CaptionButton>
          <CaptionButton aria-label="Restore"><svg width="13" height="13"><path d="M.5 3.500h9v9h-9zM3.500 3v-2.500h9v9h-3" fill="none" stroke="#000" /></svg></CaptionButton>
          <CaptionButton aria-label="Close"><svg width="12" height="12"><path d="M0 0l12 12M12 0l-12 12" stroke="#000" strokeWidth="1.1" /></svg></CaptionButton>
        </Captions>
      </TitleBar>

      <Tabs>
        {TABS.map((t, i) => <Tab key={t} $active={t === "Windows"} $wide={i > 10}>{t}</Tab>)}
      </Tabs>
      <Ribbon>
        <Group name="Window" items={WINDOW_ITEMS} />
        <Group name="Docking" items={DOCK_ITEMS} />
      </Ribbon>

      <Desk>
        <DocWindow title="roadtut1.cdsdat:1" active>
          <Pane><PlanView /></Pane>
        </DocWindow>
        <DocWindow title="roadtut1.cdsdat:2">
          <Pane><ProfileView /></Pane>
          <DialogBar>
            <Option text="Plot View" w={89} />
            <Option text="Box" w={62} type="radio" />
            <Option text="Grid" w={59} type="radio" off />
            <Option text="IP's" w={58} />
            <Option text="VC's" w={62} />
            <Option text="Grades" w={82} />
            <Caption htmlFor="exag2" $w={88}>Exaggeration</Caption>
            <Field id="exag2" data-center $w={69} $gap={9} defaultValue="2" />
            <PushButton type="button" $w={58} $gap={6}>Apply</PushButton>
            <PushButton type="button" $w={20} $gap={0} aria-label="Scroll left">
              <svg width="6" height="9"><path d="M5 0v9l-5-4.500z" /></svg>
            </PushButton>
            <Slider type="range" aria-label="Position" min="0" max="100" defaultValue="0" />
            <PushButton type="button" $w={21} $gap={0} aria-label="Scroll right">
              <svg width="6" height="9"><path d="M1 0v9l5-4.500z" /></svg>
            </PushButton>
          </DialogBar>
        </DocWindow>
        <DocWindow title="roadtut1.cdsdat:3">
          <Pane><SectionView /></Pane>
          <DialogBar $low>
            <PushButton type="button" $w={30} $gap={4}>&lt;&lt;</PushButton>
            <PushButton type="button" $w={30} $gap={4}>&gt;&gt;</PushButton>
            <PushButton type="button" $w={30} $gap={4}>&lt;</PushButton>
            <PushButton type="button" $w={30} $gap={10}>&gt;</PushButton>
            <Caption htmlFor="chain" $w={66} $low>Chainage</Caption>
            <Field id="chain" $w={79} $gap={11} defaultValue="0.000" />
            <Option text="Exaggeration" w={108} />
            <Field aria-label="Exaggeration value" $w={69} $gap={11} defaultValue="2.090" />
            <PushButton type="button" $w={50} $gap={16}>Apply</PushButton>
            <Option text="Plot View" w={89} />
          </DialogBar>
        </DocWindow>
      </Desk>

      <ToolStrip>
        <Tools>
          <Grip />
          {TOOLS.map((t, i) =>
            t.art ? (
              <Tool key={i} aria-label={t.id} $plain={t.plain}>
                <svg viewBox="0 0 30 30" aria-hidden="true">
                  {!t.plain && <path d="M0 0h1v1h-1z" />}
                  {t.art}
                </svg>
              </Tool>
            ) : (
              <ToolRule key={i} />
            )
          )}
        </Tools>
      </ToolStrip>

      <StatusBar>
        <StatusMessage>{"Cut - Fill    93.699"}</StatusMessage>
        <StatusFields>
          <Progress role="progressbar" aria-label="Progress" aria-valuenow={100} />
          <StatusInput aria-label="Point number" defaultValue="2128" />
          <StatusCell $w={119}>E:523111.477</StatusCell>
          <StatusCell $w={225}>N:6905073.388</StatusCell>
          <StatusCell $w={73}>deg</StatusCell>
          <StatusCell $w={40}>m</StatusCell>
        </StatusFields>
      </StatusBar>
    </Page>
  );
}
